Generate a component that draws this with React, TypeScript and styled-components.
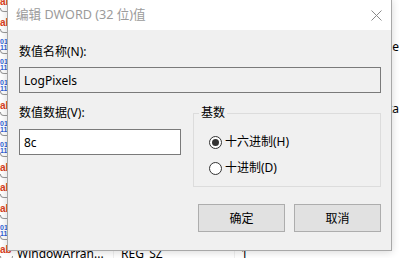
import React from "react";
import styled, { createGlobalStyle } from "styled-components";

const GlobalStyle = createGlobalStyle`
  html, body {
    margin: 0;
    padding: 0;
    background: #fff;
  }
  body {
    font-family: "Noto Sans", "Noto Sans CJK SC", sans-serif;
    font-size: 12px;
    color: #000;
  }
`;

const Screen = styled.div`
  position: relative;
  width: 399px;
  height: 258px;
  overflow: hidden;
  background: #fff;
`;

// registry value list behind the dialog
const ValueList = styled.div`
  display: flex;
  flex-direction: column;
  margin-top: -5px;
`;

const ListRow = styled.div`
  display: flex;
  align-items: center;
  height: 20.67px;
  flex-shrink: 0;
  white-space: nowrap;
`;

const IconCell = styled.div`
  width: 17px;
  height: 16px;
  flex-shrink: 0;
  position: relative;
`;

const IconGlyph = styled.span<{ $kind: "sz" | "bin" }>`
  position: absolute;
  left: 0;
  top: ${(p) => (p.$kind === "sz" ? "0px" : "0px")};
  font-family: "Liberation Sans", sans-serif;
  font-weight: bold;
  font-size: ${(p) => (p.$kind === "sz" ? "10px" : "7px")};
  line-height: ${(p) => (p.$kind === "sz" ? "10px" : "6px")};
  color: ${(p) => (p.$kind === "sz" ? "#d9411e" : "#2f5fd6")};
  white-space: pre;
`;

const IconArc = styled.span`
  position: absolute;
  left: 0;
  top: 11px;
  width: 11px;
  height: 3px;
  border: 1px solid #9a9a9a;
  border-top: none;
  border-radius: 0 0 6px 6px;
`;

const NameCell = styled.div`
  width: 96px;
  overflow: hidden;
`;

const TypeCell = styled.div`
  width: 113px;
  padding-left: 7px;
  border-left: 1px solid #f0f0f0;
  height: 100%;
  display: flex;
  align-items: center;
`;

const DataCell = styled.div`
  padding-left: 6px;
  border-left: 1px solid #f0f0f0;
  height: 100%;
  display: flex;
  align-items: center;
`;

// dialog
const Dialog = styled.div`
  position: absolute;
  left: 7px;
  top: -1px;
  width: 383px;
  border: 1px solid #a8a8a8;
  background: #f0f0f0;
  box-shadow: 0 1px 8px rgba(0, 0, 0, 0.16);
  display: flex;
  flex-direction: column;
`;

const TitleBar = styled.div`
  height: 30px;
  background: #fff;
  display: flex;
  align-items: center;
  justify-content: space-between;
  padding: 0 9px 0 8px;
  color: #9b9b9b;
  font-size: 12.6px;
  line-height: 16px;
`;

const CloseIcon = styled.svg`
  width: 11px;
  height: 11px;
  display: block;
`;

const Body = styled.div`
  height: 220px;
  box-sizing: border-box;
  padding: 14px 10px 0 11px;
  display: flex;
  flex-direction: column;
`;

const FieldLabel = styled.div`
  line-height: 16px;
  height: 16px;
`;

const TextBox = styled.input<{ $readOnly?: boolean }>`
  box-sizing: border-box;
  height: 26px;
  width: 100%;
  margin: 7px 0 0;
  padding: 0 4px;
  border: 1px solid #7a7a7a;
  background: ${(p) => (p.$readOnly ? "#f0f0f0" : "#fff")};
  font: inherit;
  color: #000;
  outline: none;
`;

const DataRow = styled.div`
  display: flex;
  gap: 12px;
  margin-top: 12px;
`;

const DataColumn = styled.div`
  width: 162px;
  display: flex;
  flex-direction: column;
  & > input {
    margin-top: 8px;
  }
`;

const GroupBox = styled.fieldset`
  box-sizing: border-box;
  width: 188px;
  height: 82px;
  margin: 0;
  padding: 0 0 0 15px;
  border: 1px solid #dcdcdc;
  display: flex;
  flex-direction: column;
`;

const GroupLegend = styled.legend`
  padding: 0 2px;
  margin-left: -10px;
  line-height: 16px;
`;

const RadioRow = styled.label<{ $first?: boolean }>`
  display: flex;
  align-items: center;
  height: 16px;
  line-height: 16px;
  margin-top: ${(p) => (p.$first ? "13px" : "10px")};
`;

const RadioCircle = styled.span<{ $checked?: boolean }>`
  box-sizing: border-box;
  width: 13px;
  height: 13px;
  border: 1px solid #333;
  border-radius: 50%;
  background: #fff;
  display: flex;
  align-items: center;
  justify-content: center;
  margin-right: 3px;
  &::after {
    content: "";
    width: 7px;
    height: 7px;
    border-radius: 50%;
    background: ${(p) => (p.$checked ? "#333" : "transparent")};
  }
`;

const ButtonRow = styled.div`
  display: flex;
  justify-content: flex-end;
  gap: 9px;
  margin-top: 17px;
`;

const DialogButton = styled.button`
  box-sizing: border-box;
  width: 87px;
  height: 28px;
  border: 1px solid #adadad;
  background: #e1e1e1;
  font: inherit;
  color: #000;
  padding: 0;
`;

type ValueRow = {
  kind: "sz" | "bin";
  name: string;
  type: string;
  data: string;
};

const rows: ValueRow[] = [
  { kind: "sz", name: "ActiveWndTrkTimeout", type: "REG_DWORD", data: "0" },
  { kind: "sz", name: "BlockSendInputResets", type: "REG_SZ", data: "0" },
  { kind: "bin", name: "CaretTimeout", type: "REG_BINARY", data: "90 12 03 80 10 00 00 00 00 00 00 00 00 0e" },
  { kind: "bin", name: "CaretWidth", type: "REG_DWORD", data: "1" },
  { kind: "bin", name: "ClickLockTime", type: "REG_DWORD", data: "1200" },
  { kind: "sz", name: "CoolSwitchColumns", type: "REG_SZ", data: "Microsoft YaHei UI Regular Data" },
  { kind: "bin", name: "CursorBlinkRate", type: "REG_DWORD", data: "530" },
  { kind: "bin", name: "DockMoving", type: "REG_DWORD", data: "1" },
  { kind: "sz", name: "DragFromMaximize", type: "REG_SZ", data: "1" },
  { kind: "sz", name: "DragFullWindows", type: "REG_SZ", data: "1" },
  { kind: "sz", name: "DragHeight", type: "REG_SZ", data: "4" },
  { kind: "bin", name: "LogPixels", type: "REG_DWORD", data: "140" },
  { kind: "sz", name: "WindowArran...", type: "REG_SZ", data: "1" },
];

const TypeIcon: React.FC<{ kind: "sz" | "bin" }> = ({ kind }) => (
  <IconCell>
    <IconGlyph $kind={kind}>{kind === "sz" ? "ab" : "011\n110"}</IconGlyph>
    <IconArc />
  </IconCell>
);

const App: React.FC = () => {
  return (
    <>
      <GlobalStyle />
      <Screen>
        <ValueList>
          {rows.map((row) => (
            <ListRow key={row.name}>
              <TypeIcon kind={row.kind} />
              <NameCell>{row.name}</NameCell>
              <TypeCell>{row.type}</TypeCell>
              <DataCell>{row.data}</DataCell>
            </ListRow>
          ))}
        </ValueList>

        <Dialog>
          <TitleBar>
            <span>编辑 DWORD (32 位)值</span>
            <CloseIcon viewBox="0 0 11 11">
              <path d="M0.5 0.5 L10.5 10.5 M10.5 0.5 L0.5 10.5" stroke="#8a8a8a" strokeWidth="1" fill="none" />
            </CloseIcon>
          </TitleBar>
          <Body>
            <FieldLabel>数值名称(N):</FieldLabel>
            <TextBox $readOnly readOnly value="LogPixels" />
            <DataRow>
              <DataColumn>
                <FieldLabel>数值数据(V):</FieldLabel>
                <TextBox readOnly value="8c" />
              </DataColumn>
              <GroupBox>
                <GroupLegend>基数</GroupLegend>
                <RadioRow $first>
                  <RadioCircle $checked />
                  十六进制(H)
                </RadioRow>
                <RadioRow>
                  <RadioCircle />
                  十进制(D)
                </RadioRow>
              </GroupBox>
            </DataRow>
            <ButtonRow>
              <DialogButton>确定</DialogButton>
              <DialogButton>取消</DialogButton>
            </ButtonRow>
          </Body>
        </Dialog>
      </Screen>
    </>
  );
};

export default App;
